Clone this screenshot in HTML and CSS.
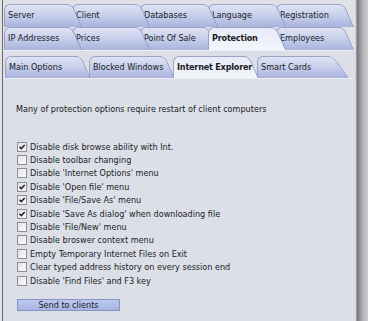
FILE: index.html
```html
<!DOCTYPE html>
<html lang="en">
<head>
    <meta charset="UTF-8">
    <meta name="viewport" content="width=device-width, initial-scale=1.0">
    <title>Protection - Internet Explorer</title>
    <link rel="stylesheet" href="styles.css">
</head>
<body>
    <div class="frame">
        <div class="tabrow">
            <div class="tab">Server</div>
            <div class="tab">Client</div>
            <div class="tab">Databases</div>
            <div class="tab">Language</div>
            <div class="tab">Registration</div>
        </div>
        <div class="tabrow">
            <div class="tab">IP Addresses</div>
            <div class="tab">Prices</div>
            <div class="tab">Point Of Sale</div>
            <div class="tab active">Protection</div>
            <div class="tab">Employees</div>
        </div>
        <div class="panel">
            <div class="tabrow subtabs">
                <div class="tab">Main Options</div>
                <div class="tab">Blocked Windows</div>
                <div class="tab active">Internet Explorer</div>
                <div class="tab">Smart Cards</div>
            </div>
            <div class="page">
                <p class="note">Many of protection options require restart of client computers</p>
                <div class="options">
                    <label><input type="checkbox" checked> Disable disk browse ability with Int.</label>
                    <label><input type="checkbox"> Disable toolbar changing</label>
                    <label><input type="checkbox"> Disable 'Internet Options' menu</label>
                    <label><input type="checkbox" checked> Disable 'Open file' menu</label>
                    <label><input type="checkbox" checked> Disable 'File/Save As' menu</label>
                    <label><input type="checkbox" checked> Disable 'Save As dialog' when downloading file</label>
                    <label><input type="checkbox"> Disable 'File/New' menu</label>
                    <label><input type="checkbox"> Disable broswer context menu</label>
                    <label><input type="checkbox"> Empty Temporary Internet Files on Exit</label>
                    <label><input type="checkbox"> Clear typed address history on every session end</label>
                    <label><input type="checkbox"> Disable 'Find Files' and F3 key</label>
                </div>
                <button class="send">Send to clients</button>
            </div>
        </div>
    </div>
    <div class="edge"></div>
</body>
</html>
```

FILE: styles.css
```css
/* Ventana de ajustes: pestañas arriba, página de opciones abajo */
body {
    margin: 0;
    width: 368px;
    height: 321px;
    overflow: hidden;
    display: flex;
    background: #e2e2e2;
    font-family: "DejaVu Sans Condensed", "DejaVu Sans", sans-serif;
    font-stretch: condensed;
    font-size: 9px;
    color: #1a1b24;
}

.frame {
    flex: 1;
    display: flex;
    flex-direction: column;
    margin-left: 2px;
    padding-top: 4px;
    border-left: 1px solid #6b6b6b;
    background: #e0e1e4;
}

/* Barra gris de la derecha */
.edge {
    width: 13px;
    background: linear-gradient(to right, #d2d3d6 0, #d2d3d6 1px, #6d6e70 2px, #8c8d90 4px, #b3b4b6 8px, #cdcdcf 13px);
}

.tabrow {
    display: flex;
    padding-left: 1px;
}

.tab {
    position: relative;
    width: 68px;
    height: 23px;
    line-height: 23px;
    padding-left: 4px;
    box-sizing: border-box;
    white-space: nowrap;
}

.tab::before,
.tab::after {
    content: "";
    position: absolute;
    top: 0;
    bottom: 0;
    z-index: -1;
    background: linear-gradient(#dfe4f4, #c3cbea 55%, #a9b4dc);
    border-top: 1px solid #9aa4c8;
}

.tab::before {
    left: 0;
    width: 64px;
    border-left: 1px solid #9aa4c8;
    border-top-left-radius: 6px;
}

.tab::after {
    left: 47px;
    width: 20px;
    border-right: 1px solid #8590ba;
    border-top-right-radius: 6px;
    transform: skewX(24deg);
    transform-origin: top;
}

/* la pestaña de la izquierda queda encima de la siguiente */
.tab:nth-child(1) { z-index: 5; }
.tab:nth-child(2) { z-index: 4; }
.tab:nth-child(3) { z-index: 3; }
.tab:nth-child(4) { z-index: 2; }
.tab:nth-child(5) { z-index: 1; }

.tab.active {
    z-index: 6;
    font-weight: bold;
    letter-spacing: -0.2px;
}

.tab.active::before,
.tab.active::after {
    background: linear-gradient(#e6eaf7, #eef1f9 60%, #f3f5fa);
}

.panel {
    flex: 1;
    background: #dcdfe7;
    border-top: 1px solid #eef0f5;
}

.subtabs {
    padding: 5px 0 0 2px;
    border-bottom: 1px solid #eceef4;
}

.subtabs .tab {
    width: 84px;
    height: 22px;
    line-height: 22px;
}

.subtabs .tab::before {
    width: 72px;
}

.subtabs .tab::after {
    left: 55px;
}

/* la última pestaña tiene el corte más largo */
.subtabs .tab:last-child::after {
    transform: skewX(36deg);
}

.page {
    padding-left: 13px;
}

.note {
    margin: 24px 0 0;
    line-height: 13px;
}

.options {
    margin-top: 24px;
    display: flex;
    flex-direction: column;
}

.options label {
    display: flex;
    align-items: center;
    height: 13.4px;
}

.options input {
    appearance: none;
    width: 10px;
    height: 10px;
    margin: 0 3px 0 1px;
    border: 1px solid #8d8f93;
    background: linear-gradient(135deg, #e3e4e6, #fbfbfc);
}

.options input:checked {
    background: url("data:image/svg+xml,%3Csvg xmlns='http://www.w3.org/2000/svg' viewBox='0 0 8 8'%3E%3Cpath d='M1.5 3.8l1.8 1.8 3.4-3.6' fill='none' stroke='%23202020' stroke-width='1.5'/%3E%3C/svg%3E") center/8px 8px no-repeat,
        linear-gradient(135deg, #e3e4e6, #fbfbfc);
}

.send {
    display: block;
    margin: 12px 0 0 1px;
    width: 103px;
    height: 12px;
    padding: 0;
    border: 1px solid #8793c2;
    background: linear-gradient(#bcc8ef, #a6b5e4);
    font: inherit;
    color: #1a1b24;
    line-height: 10px;
}
```
